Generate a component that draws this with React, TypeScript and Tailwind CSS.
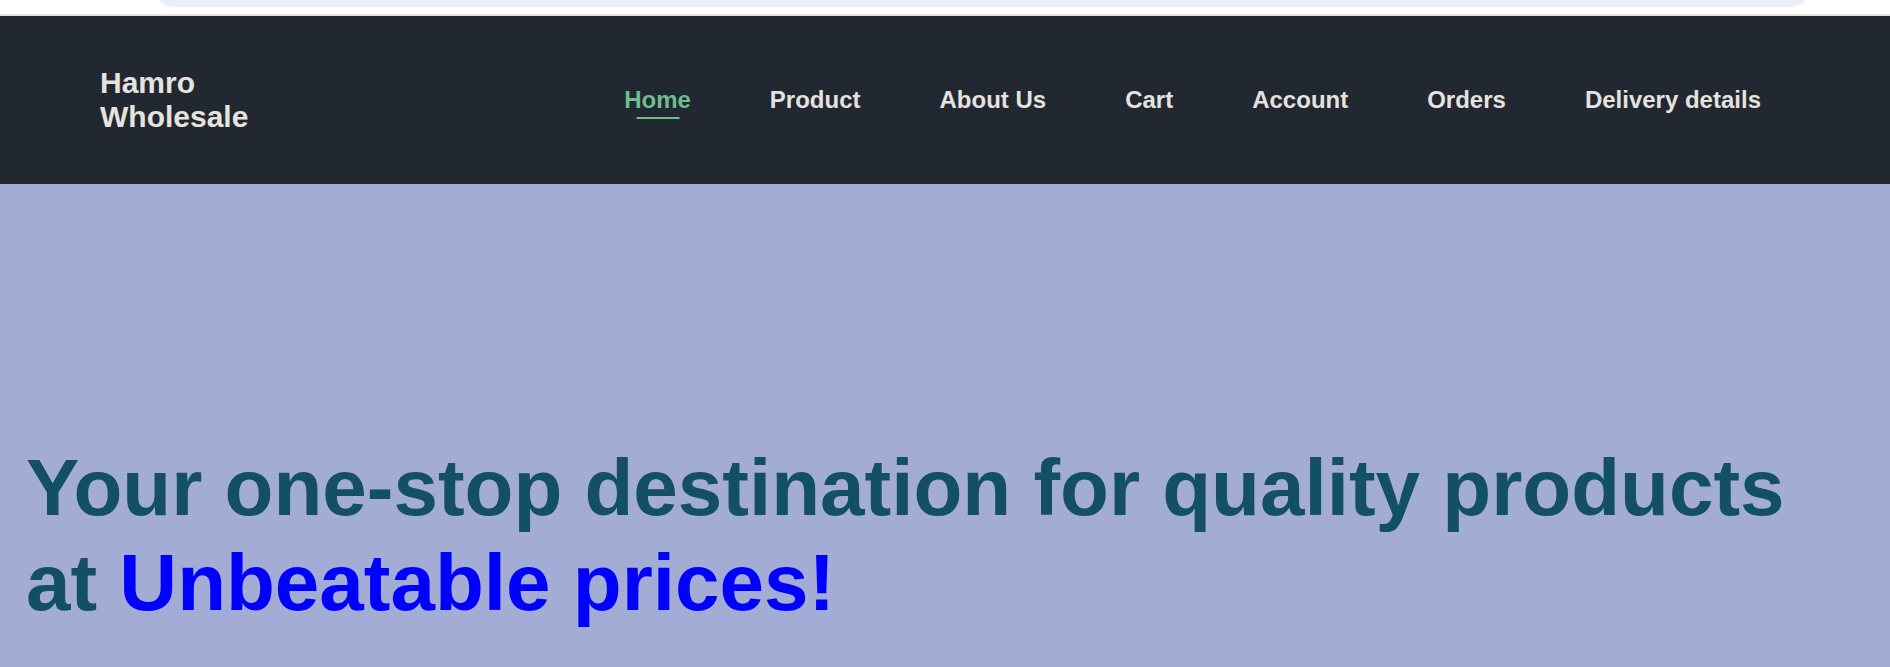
import React from "react";

const links = ["Home", "Product", "About Us", "Cart", "Account", "Orders", "Delivery details"];

const App = () => {
  return (
    <div className="w-full min-h-screen bg-white font-['Liberation_Sans',Arial,sans-serif]">
      {/* top strip */}
      <div className="h-[16px] overflow-hidden border-b-2 border-[#e2e2e2]">
        <div className="ml-[154px] mr-[80px] mt-[-33px] h-[40px] rounded-[20px] bg-[#e9eef8]"></div>
      </div>

      <header className="flex h-[168px] items-center justify-between bg-[#222831] pl-[100px] pr-[129px]">
        <h2 className="w-[170px] text-[30px] font-bold leading-[1.15] text-[#e6e2de]">Hamro Wholesale</h2>
        <ul className="flex items-center gap-[79px]">
          {links.map((link, index) => (
            <li key={index} className="relative">
              <a
                href="#"
                className={`text-[24px] font-bold leading-[1.15] ${index === 0 ? "text-[#6bbe8d]" : "text-[#e6e2de]"}`}
              >
                {link}
              </a>
              {index === 0 && (
                <span className="absolute left-1/2 top-[31px] h-[2px] w-[43px] -translate-x-1/2 bg-[#6bbe8d]"></span>
              )}
            </li>
          ))}
        </ul>
      </header>

      <section className="h-[483px] bg-[#a3acd4] pl-[26px] pr-[100px] pt-[256px]">
        <h1 className="text-[80px] font-bold leading-[95px] text-[#134f66]">
          Your one-stop destination for quality products at <span className="text-[#0000ff]">Unbeatable prices!</span>
        </h1>
      </section>
    </div>
  );
};

export default App;
